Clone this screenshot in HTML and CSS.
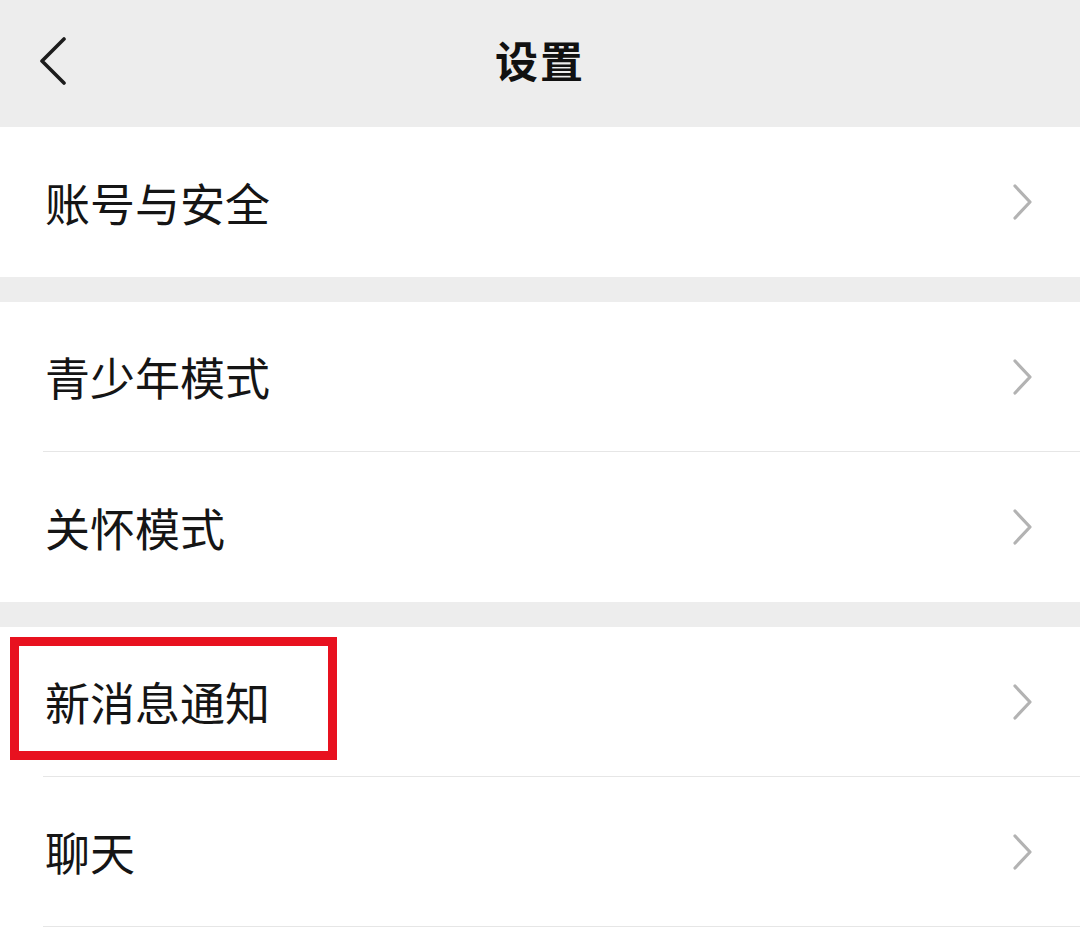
FILE: index.html
```html
<!DOCTYPE html>
<html lang="zh">
<head>
<meta charset="utf-8">
<link rel="stylesheet" href="styles.css">
</head>
<body>
<div class="page">
  <header class="topbar">
    <svg class="back" width="40" height="60" viewBox="0 0 40 60">
      <polyline points="24,9 2,31 24,53" fill="none" stroke="#1c1c1c" stroke-width="3.6" stroke-linecap="round" stroke-linejoin="round"/>
    </svg>
    <div class="title">设置</div>
  </header>

  <section class="group">
    <div class="row"><span class="label">账号与安全</span><svg class="chev" width="22" height="40" viewBox="0 0 22 40"><polyline points="4,4 19,20 4,36" fill="none" stroke="#b3b3b3" stroke-width="3.2" stroke-linecap="round" stroke-linejoin="round"/></svg></div>
  </section>

  <section class="group">
    <div class="row line"><span class="label">青少年模式</span><svg class="chev" width="22" height="40" viewBox="0 0 22 40"><polyline points="4,4 19,20 4,36" fill="none" stroke="#b3b3b3" stroke-width="3.2" stroke-linecap="round" stroke-linejoin="round"/></svg></div>
    <div class="row"><span class="label">关怀模式</span><svg class="chev" width="22" height="40" viewBox="0 0 22 40"><polyline points="4,4 19,20 4,36" fill="none" stroke="#b3b3b3" stroke-width="3.2" stroke-linecap="round" stroke-linejoin="round"/></svg></div>
  </section>

  <section class="group">
    <div class="row line"><span class="label">新消息通知</span><svg class="chev" width="22" height="40" viewBox="0 0 22 40"><polyline points="4,4 19,20 4,36" fill="none" stroke="#b3b3b3" stroke-width="3.2" stroke-linecap="round" stroke-linejoin="round"/></svg><div class="highlight"></div></div>
    <div class="row line"><span class="label">聊天</span><svg class="chev" width="22" height="40" viewBox="0 0 22 40"><polyline points="4,4 19,20 4,36" fill="none" stroke="#b3b3b3" stroke-width="3.2" stroke-linecap="round" stroke-linejoin="round"/></svg></div>
  </section>
</div>
</body>
</html>
```

FILE: styles.css
```css
html, body {
  margin: 0;
  padding: 0;
  background: #ffffff;
}
body {
  font-family: "Noto Sans CJK SC", "Noto Sans", sans-serif;
  color: #111111;
  width: 1080px;
  height: 939px;
  overflow: hidden;
}
.page {
  display: flex;
  flex-direction: column;
  background: #ededed;
}
.topbar {
  height: 127px;
  box-sizing: border-box;
  padding-bottom: 10px;
  background: #ededed;
  display: flex;
  align-items: center;
  justify-content: center;
  position: relative;
}
.back {
  position: absolute;
  left: 40px;
  top: 30px;
}
.title {
  font-size: 43px;
  font-weight: 700;
  color: #111111;
  letter-spacing: 2px;
}
.group {
  background: #ffffff;
  padding-left: 43px;
  margin-bottom: 25px;
}
.group:last-child {
  margin-bottom: 0;
  padding-bottom: 12px;
}
.row {
  height: 150px;
  box-sizing: border-box;
  display: flex;
  align-items: center;
  justify-content: space-between;
  padding-left: 2px;
  padding-right: 47px;
  position: relative;
}
.row.line {
  border-bottom: 1px solid #e6e6e6;
}
.label {
  font-size: 45px;
  font-weight: 400;
  color: #151515;
  letter-spacing: 0;
}
.chev {
  display: block;
}
.highlight {
  position: absolute;
  left: -33px;
  top: 10px;
  width: 327px;
  height: 123px;
  box-sizing: border-box;
  border: 9px solid #e8111f;
}
```
